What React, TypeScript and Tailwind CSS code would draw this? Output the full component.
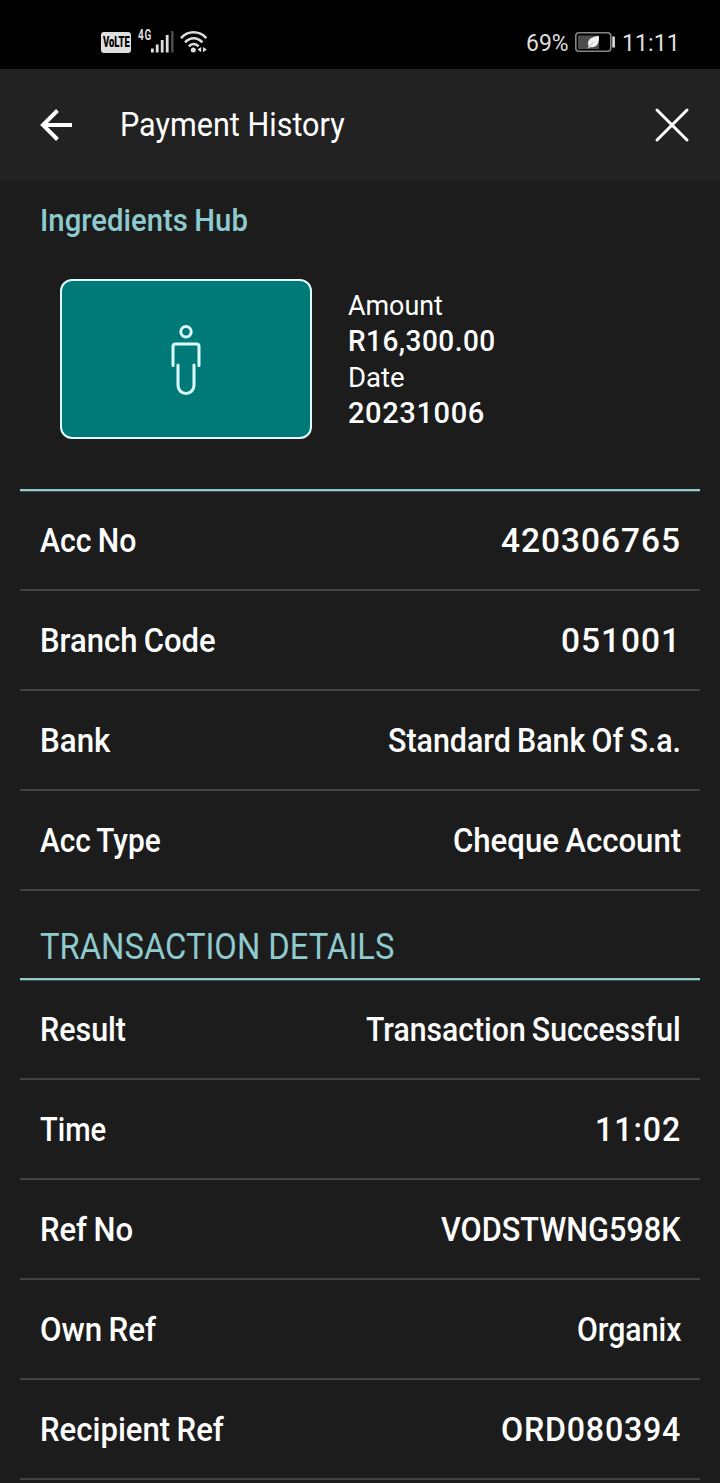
import { useLayoutEffect, useRef, useState } from "react"
import type React from "react"
import clsx from "clsx"

interface Detail {
  label: string
  labelWidth: string
  value: string
  valueWidth: string
}

const accountDetails: Detail[] = [
  { label: "Acc No", labelWidth: "w-[96px]", value: "420306765", valueWidth: "w-[180px] -mr-[.5px] tracking-[1px]" },
  { label: "Branch Code", labelWidth: "w-[176px]", value: "051001", valueWidth: "w-[120px] -mr-[.5px] tracking-[1px]" },
  { label: "Bank", labelWidth: "w-[70px]", value: "Standard Bank Of S.a.", valueWidth: "w-[293px] -mr-px" },
  { label: "Acc Type", labelWidth: "w-[121px]", value: "Cheque Account", valueWidth: "w-[228px] -mr-px" },
]

const transactionDetails: Detail[] = [
  { label: "Result", labelWidth: "w-[86px]", value: "Transaction Successful", valueWidth: "w-[315px] -mr-px" },
  { label: "Time", labelWidth: "w-[66px]", value: "11:02", valueWidth: "w-[86px] -mr-[.5px] tracking-[1px]" },
  { label: "Ref No", labelWidth: "w-[93px]", value: "VODSTWNG598K", valueWidth: "w-[240px] -mr-px" },
  { label: "Own Ref", labelWidth: "w-[116px]", value: "Organix", valueWidth: "w-[104px] -mr-px" },
  { label: "Recipient Ref", labelWidth: "w-[184px]", value: "ORD080394", valueWidth: "w-[180px] -mr-[.5px] tracking-[.8px]" },
]

interface FitTextProps {
  children: React.ReactNode
  className?: string
}

// Condenses a line of text horizontally so that it fills its box
function FitText({ children, className }: FitTextProps) {
  const box = useRef<HTMLSpanElement>(null)
  const line = useRef<HTMLSpanElement>(null)
  const [scale, setScale] = useState(1)

  useLayoutEffect(() => {
    if (!box.current || !line.current) return
    setScale(box.current.offsetWidth / line.current.offsetWidth)
  }, [children])

  return (
    <span ref={box} className={clsx("block shrink-0 whitespace-nowrap", className)}>
      <span ref={line} className="inline-block origin-left" style={{ transform: `scaleX(${scale})` }}>
        {children}
      </span>
    </span>
  )
}

function StatusBar() {
  return (
    <div className="flex h-[69px] items-center justify-between bg-black pt-[15px] pr-[40px] pl-[101px] text-[#dedede]">
      <div className="flex items-center">
        <div className="flex h-[21px] w-[30px] items-center justify-center rounded-[3px] bg-[#dedede] text-[14px] leading-none font-black text-black">
          <FitText className="w-[27px]">VoLTE</FitText>
        </div>
        <FitText className="mb-[14px] ml-[7px] w-[14px] text-[15px] leading-none font-bold tracking-[1px]">4G</FitText>
        <svg className="-ml-px h-[24px] w-[24px]" viewBox="0 0 24 24" fill="currentColor">
          <rect x="0" y="18.5" width="2.8" height="4" />
          <rect x="4.8" y="14.5" width="2.8" height="8" />
          <rect x="9.8" y="10" width="2.8" height="12.5" />
          <rect x="14.8" y="5" width="2.8" height="17.5" />
          <rect x="20" y="1" width="2.6" height="21.5" fill="#4a4a4a" />
        </svg>
        <svg className="ml-[5px] h-[24px] w-[28px]" viewBox="0 0 28 24" fill="none" stroke="currentColor" strokeWidth="2.5">
          <path d="M1 8.2C8 .4 19 .4 26.4 8.2" />
          <path d="M5 12.4C10 6.8 17.4 6.8 22.4 12.4" />
          <path d="M8.8 16.4C11.6 13.2 15.8 13.2 18.6 16.4" />
          <circle cx="13.3" cy="20" r="2.5" fill="currentColor" stroke="none" />
          <path d="M21.2 17v5.2L17.4 19.6zM23 17v5.2L26.8 19.6z" fill="currentColor" stroke="none" />
        </svg>
      </div>

      <div className="flex items-center text-[24px] leading-none">
        <FitText className="mt-px mr-px w-[43px]">69%</FitText>
        <svg className="mr-[6px] ml-[5px] h-[22px] w-[41px]" viewBox="0 0 41 22">
          <rect x="0.8" y="1.8" width="35" height="18.4" rx="3" fill="none" stroke="#858585" strokeWidth="1.6" />
          <rect x="3" y="4.5" width="21" height="13.5" fill="#4d4d4d" />
          <path d="M24 5C17 5.5 13 8 13 12.5c0 1 .3 2 .8 2.7l-1 1.8 1 .4 1.2-1.4C21 17.5 24.5 13 24 5z" fill="#f0f0f0" />
          <path d="M14.5 15L18 11.5" stroke="#8a8a8a" strokeWidth=".6" />
          <rect x="37.3" y="5.5" width="2.6" height="11" fill="#dedede" />
        </svg>
        <FitText className="mt-px w-[58px]">11:11</FitText>
      </div>
    </div>
  )
}

function Header() {
  return (
    <header className="flex h-[112px] items-center bg-[#222222] pr-[30px] pl-[40px]">
      <svg className="h-[34px] w-[33px]" viewBox="0 0 33 34" fill="none" stroke="white" strokeWidth="4">
        <path d="M17.5 2.5L3 17l14.5 14.5M2.5 17H32" />
      </svg>
      <FitText className="ml-[47px] w-[225px] text-[33px]">Payment History</FitText>
      <svg className="ml-auto h-[36px] w-[36px]" viewBox="0 0 36 36" stroke="white" strokeWidth="3" strokeLinecap="round">
        <path d="M3 3l30 30M33 3L3 33" />
      </svg>
    </header>
  )
}

function PaymentSummary() {
  return (
    <section>
      <h2 className="pt-[19px] pl-[40px] text-[32px] leading-[40px] font-medium text-[#8ecace]">
        <FitText className="w-[208px] [word-spacing:-1px]">Ingredients Hub</FitText>
      </h2>
      <div className="flex pt-[39px] pl-[60px]">
        <div className="flex h-[160px] w-[252px] items-center justify-center rounded-[12px] border-2 border-[#e2fbfb] bg-[#007a79]">
          <svg className="h-[72px] w-[34px]" viewBox="0 0 34 72" fill="none" stroke="#dcfcfb" strokeWidth="3" strokeLinecap="round">
            <circle cx="17" cy="8.8" r="5.2" />
            <path d="M4 42.5V23.5q0-2.5 2.500-2.500h21q2.500 0 2.500 2.500v19" />
            <path d="M9 42v20.500a8 8 0 0 0 16 0V42" />
          </svg>
        </div>
        <div className="ml-[36px] pt-[9px] text-[28px] leading-[36px]">
          <FitText className="w-[95px]">Amount</FitText>
          <FitText className="-mt-px mb-px w-[148px] text-[29.5px] font-medium tracking-[.5px]">R16,300.00</FitText>
          <FitText className="w-[57px]">Date</FitText>
          <FitText className="-mt-px w-[137px] text-[29.5px] font-medium tracking-[.6px]">20231006</FitText>
        </div>
      </div>
    </section>
  )
}

function DetailList({ details }: { details: Detail[] }) {
  return (
    <dl className="mx-[20px] border-t-2 border-[#94c9ca] shadow-[inset_0_1px_0_#3d5557]">
      {details.map((detail) => (
        <div
          key={detail.label}
          className="flex h-[100px] items-center justify-between border-b-2 border-[#424242] px-[20px] text-[34px] font-medium [word-spacing:-1.5px]"
        >
          <dt>
            <FitText className={detail.labelWidth}>{detail.label}</FitText>
          </dt>
          <dd>
            <FitText className={detail.valueWidth}>{detail.value}</FitText>
          </dd>
        </div>
      ))}
    </dl>
  )
}

export default function App() {
  return (
    <main className="h-[1483px] w-[720px] overflow-hidden bg-[#1c1c1c] font-['Roboto',sans-serif] text-white">
      <StatusBar />
      <Header />
      <PaymentSummary />
      <div className="mt-[50px]">
        <DetailList details={accountDetails} />
      </div>
      <h2 className="mt-[32px] mb-[7px] pl-[40px] text-[37px] leading-[48px] text-[#8ecace]">
        <FitText className="w-[354px]">TRANSACTION DETAILS</FitText>
      </h2>
      <DetailList details={transactionDetails} />
    </main>
  )
}
